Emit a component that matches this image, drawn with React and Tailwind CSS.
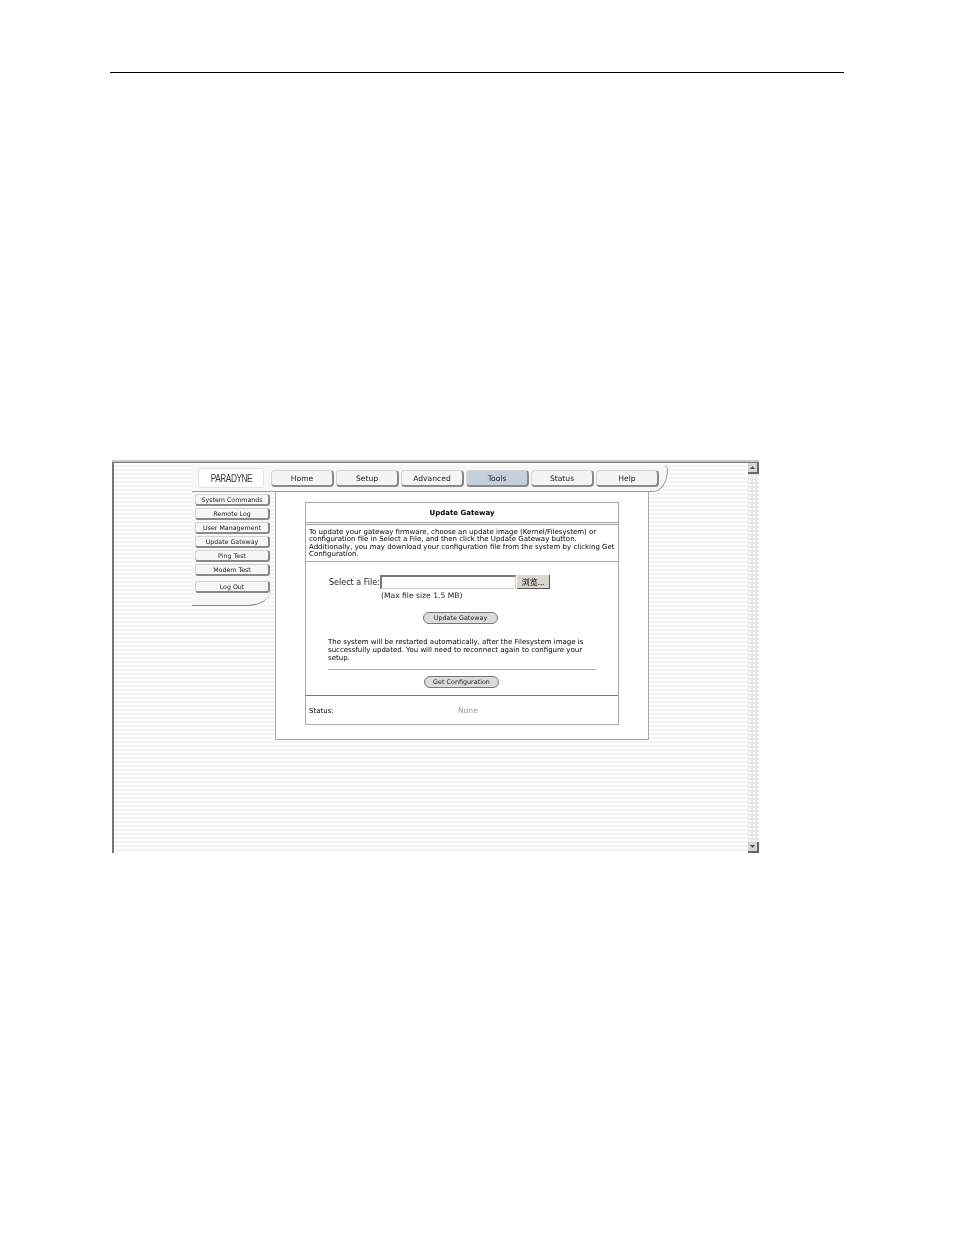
const menuItems = ["System Commands", "Remote Log", "User Management", "Update Gateway", "Ping Test", "Modem Test"];
const tabs = ["Home", "Setup", "Advanced", "Tools", "Status", "Help"];

function Tab({ label }) {
  const active = label === "Tools";
  return (
    <div
      className={`flex h-[17px] w-[63px] items-center justify-center rounded-[4px] border border-r-2 border-b-2 border-[#d4d4d4] border-r-[#8a8a8a] border-b-[#8a8a8a] pt-[2px] text-[7.6px] text-[#222] ${
        active ? "bg-[#c6cfdc]" : "bg-[#f4f4f4]"
      }`}
    >
      {label}
    </div>
  );
}

function MenuButton({ label, className = "" }) {
  return (
    <div
      className={`flex h-[12px] w-[75px] items-center justify-center rounded-[3px] border border-r-2 border-b-2 border-[#d4d4d4] border-r-[#8a8a8a] border-b-[#8a8a8a] bg-[#f6f6f6] text-[6.3px] text-[#222] ${className}`}
    >
      {label}
    </div>
  );
}

function PillButton({ label }) {
  return (
    <div className="flex h-[12px] w-[75px] items-center justify-center rounded-full border border-[#777] bg-[#dcdcdc] pt-[1px] text-[6.4px] text-[#222]">
      {label}
    </div>
  );
}

function ScrollArrow({ up }) {
  return (
    <div className="flex h-[11px] w-[11px] items-center justify-center border-r-2 border-b-2 border-[#666] bg-[#d8d6d0]">
      <svg width="5" height="3" viewBox="0 0 5 3">
        <path d={up ? "M2.5 0L5 3H0Z" : "M0 0H5L2.5 3Z"} fill="#555" />
      </svg>
    </div>
  );
}

export default function App() {
  return (
    <div className="h-[1235px] w-[954px] bg-white pt-[72px] font-['DejaVu_Sans',sans-serif]">
      <div className="ml-[110px] h-px w-[734px] bg-black" />

      <div className="mt-[387px] ml-[112px] h-[393px] w-[647px] border-t-2 border-t-[#c8c8c0] blur-[0.25px]">
        <div className="flex h-full border-t border-l-2 border-[#777]">
          <div className="flex-1 bg-[repeating-linear-gradient(180deg,#ffffff_0,#ffffff_2px,#f4f2f5_2px,#f4f2f5_4px)] pt-[2px] pl-[78px]">
            <div className="flex h-[27px] w-[476px] items-center gap-[2px] rounded-tr-[6px] rounded-br-[18px_27px] border-r border-b border-[#999] bg-[#f7f7f7] pl-[6px]">
              <div className="mr-[5px] flex h-[20px] w-[66px] items-center justify-center rounded-[2px] border border-[#e2e2e2] bg-white font-['Liberation_Sans',sans-serif] text-[11px] text-[#333]">
                <span className="inline-block scale-x-[0.75] tracking-[-0.6px]">PARADYNE</span>
              </div>
              {tabs.map((t) => (
                <Tab key={t} label={t} />
              ))}
            </div>

            <div className="flex items-start gap-[4px]">
              <div className="flex h-[114px] w-[79px] flex-col gap-[2px] rounded-br-[24px_16px] border-b border-[#888] bg-[#f7f7f7] pt-[2px] pl-[3px]">
                {menuItems.map((m) => (
                  <MenuButton key={m} label={m} />
                ))}
                <MenuButton label="Log Out" className="mt-[3px]" />
              </div>

              <div className="h-[248px] w-[374px] border-r border-b border-l border-[#aaa] bg-white px-[29px] pt-[10px]">
                <div className="h-[223px] border border-[#aaa]">
                  <div className="flex h-[19px] items-center justify-center pt-[2px] text-[7px] font-bold text-black">Update Gateway</div>
                  <div className="h-[3px] border-y border-[#aaa] bg-[#eee]" />
                  <p className="h-[37px] border-b border-[#aaa] pt-[4px] pl-[3px] text-[7px] leading-[7.4px] text-black">
                    To update your gateway firmware, choose an update image (Kernel/Filesystem) or configuration file in Select a File, and then click the Update Gateway button. Additionally, you may download your configuration file from the system by clicking Get Configuration.
                  </p>
                  <div className="flex h-[134px] flex-col border-b border-[#777] px-[22px] pt-[13px]">
                    <div className="flex items-center">
                      <span className="ml-[1px] w-[51px] pt-[2px] text-[8px] text-[#222]">Select a File:</span>
                      <div className="h-[14px] w-[136px] border border-t-2 border-l-2 border-[#ccc] border-t-[#777] border-l-[#777] bg-white" />
                      <div className="ml-[1px] flex h-[14px] w-[33px] items-center justify-center border-r border-b border-[#555] bg-[#d9d6cf] font-['Noto_Sans_CJK_SC',sans-serif] text-[8px] text-black">
                        浏览...
                      </div>
                    </div>
                    <span className="ml-[53px] text-[7.6px] leading-[14px] text-[#222]">(Max file size 1.5 MB)</span>
                    <div className="mt-[9px] flex justify-center pr-[3px]">
                      <PillButton label="Update Gateway" />
                    </div>
                    <p className="mt-[14px] text-[7px] leading-[8px] text-black">
                      The system will be restarted automatically, after the Filesystem image is successfully updated. You will need to reconnect again to configure your setup.
                    </p>
                    <div className="mt-[7px] h-px bg-[#aaa]" />
                    <div className="mt-[6px] flex justify-center pr-[1px]">
                      <PillButton label="Get Configuration" />
                    </div>
                  </div>
                  <div className="flex h-[28px] items-center px-[3px] pt-[2px]">
                    <span className="w-[25px] text-[7px] text-black">Status:</span>
                    <span className="ml-[124px] text-[7.6px] text-[#999]">None</span>
                  </div>
                </div>
              </div>
            </div>
          </div>

          <div className="flex w-[11px] flex-col justify-between bg-[#e8e8e3] bg-[radial-gradient(#fff_1px,transparent_1px)] bg-[length:4px_4px]">
            <ScrollArrow up />
            <ScrollArrow />
          </div>
        </div>
      </div>
    </div>
  );
}
